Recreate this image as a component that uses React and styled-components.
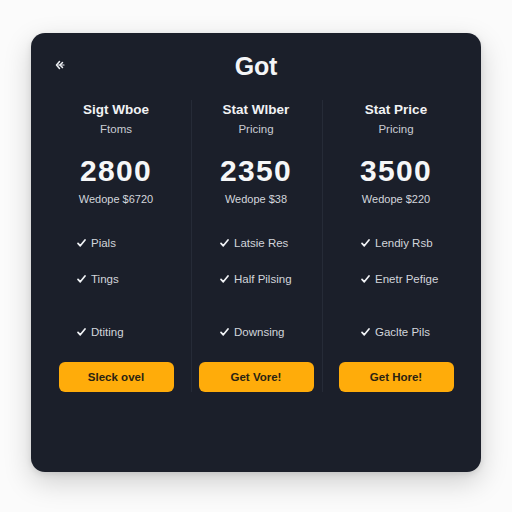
import React from "react";
import styled, { createGlobalStyle } from "styled-components";

const Global = createGlobalStyle`
  html, body { margin: 0; padding: 0; background: #fbfbfb; }
  body { font-family: "Liberation Sans", Arial, sans-serif; }
`;

const Page = styled.div`
  width: 512px;
  height: 512px;
  padding: 33px 0 0 31px;
  box-sizing: border-box;
`;

const Card = styled.div`
  width: 450px;
  height: 439px;
  box-sizing: border-box;
  background: #1b1f2a;
  border-radius: 14px;
  box-shadow: 0 10px 28px rgba(0, 0, 0, 0.18), 0 2px 6px rgba(0, 0, 0, 0.1);
  padding: 20px 15px 0;
  display: flex;
  flex-direction: column;
`;

const Header = styled.div`
  position: relative;
  height: 26px;
  display: flex;
  align-items: center;
  justify-content: center;
`;

const Back = styled.button`
  position: absolute;
  left: 7px;
  top: 5px;
  width: 14px;
  height: 14px;
  padding: 0;
  border: 0;
  background: none;
  display: flex;
  align-items: center;
  justify-content: center;
`;

const Title = styled.h1`
  margin: 0;
  font-size: 25px;
  line-height: 26px;
  font-weight: 700;
  color: #f4f5f7;
  letter-spacing: -0.2px;
`;

const Columns = styled.div`
  margin-top: 21px;
  display: grid;
  grid-template-columns: repeat(3, 140px);
`;

const Column = styled.div`
  position: relative;
  display: flex;
  flex-direction: column;
  align-items: center;
  padding-top: 1px;
  &::before {
    content: "";
    display: ${(p) => (p.$divider ? "block" : "none")};
    position: absolute;
    top: 0;
    bottom: 0;
    left: ${(p) => p.$divider}px;
    width: 1px;
    background: #262b37;
  }
`;

const PlanName = styled.div`
  font-size: 13.5px;
  line-height: 18px;
  font-weight: 700;
  color: #f1f2f4;
`;

const PlanSub = styled.div`
  margin-top: 2px;
  font-size: 11.5px;
  line-height: 16px;
  color: #c9ccd3;
`;

const Price = styled.div`
  margin-top: 17px;
  font-size: 30px;
  line-height: 34px;
  font-weight: 700;
  color: #f6f7f8;
  letter-spacing: 1.3px;
`;

const PriceSub = styled.div`
  margin-top: 3px;
  font-size: 11px;
  line-height: 16px;
  color: #d3d6dc;
`;

const Features = styled.ul`
  list-style: none;
  margin: 28px 0 0;
  padding: 0 0 0 ${(p) => p.$indent}px;
  align-self: stretch;
`;

const Feature = styled.li`
  margin-top: ${(p) => p.$gap}px;
  font-size: 11.5px;
  line-height: 16px;
  color: #d2d5db;
  display: flex;
  align-items: center;
  gap: 5px;
`;

const Button = styled.button`
  margin-top: 22px;
  width: 115px;
  height: 30px;
  border: 0;
  border-radius: 6px;
  background: #ffac0a;
  color: #2a2312;
  font-family: "Liberation Sans", Arial, sans-serif;
  font-size: 11.5px;
  font-weight: 700;
`;

const CheckIcon = () => (
  <svg width="9" height="8" viewBox="0 0 9 8" fill="none" stroke="#f1f3f6" strokeWidth="1.7" strokeLinecap="round" strokeLinejoin="round">
    <path d="M1 4.3 L3.3 6.8 L8 1" />
  </svg>
);

const plans = [
  {
    name: "Sigt Wboe",
    sub: "Ftoms",
    price: "2800",
    priceSub: "Wedope $6720",
    features: ["Pials", "Tings", "Dtiting"],
    cta: "Sleck ovel",
    divider: 0,
    indent: 31,
  },
  {
    name: "Stat Wlber",
    sub: "Pricing",
    price: "2350",
    priceSub: "Wedope $38",
    features: ["Latsie Res", "Half Pilsing", "Downsing"],
    cta: "Get Vore!",
    divider: 5,
    indent: 34,
  },
  {
    name: "Stat Price",
    sub: "Pricing",
    price: "3500",
    priceSub: "Wedope $220",
    features: ["Lendiy Rsb", "Enetr Pefige", "Gaclte Pils"],
    cta: "Get Hore!",
    divider: -4,
    indent: 35,
  },
];

const gaps = [0, 20, 37];

export default function App() {
  return (
    <>
      <Global />
      <Page>
        <Card>
          <Header>
            <Back aria-label="Back">
              <svg width="10" height="10" viewBox="0 0 10 10" fill="none" stroke="#eef0f4" strokeWidth="1.5" strokeLinecap="round" strokeLinejoin="round">
                <path d="M4.5 1.5 L1.5 5 L4.5 8.5" />
                <path d="M7.5 2.5 L5 5 L7.5 7.5" />
                <path d="M3 5 H9" strokeWidth="1.1" />
              </svg>
            </Back>
            <Title>Got</Title>
          </Header>
          <Columns>
            {plans.map((p) => (
              <Column key={p.name} $divider={p.divider}>
                <PlanName>{p.name}</PlanName>
                <PlanSub>{p.sub}</PlanSub>
                <Price>{p.price}</Price>
                <PriceSub>{p.priceSub}</PriceSub>
                <Features $indent={p.indent}>
                  {p.features.map((f, i) => (
                    <Feature key={f} $gap={gaps[i]}>
                      <CheckIcon />
                      {f}
                    </Feature>
                  ))}
                </Features>
                <Button>{p.cta}</Button>
              </Column>
            ))}
          </Columns>
        </Card>
      </Page>
    </>
  );
}
